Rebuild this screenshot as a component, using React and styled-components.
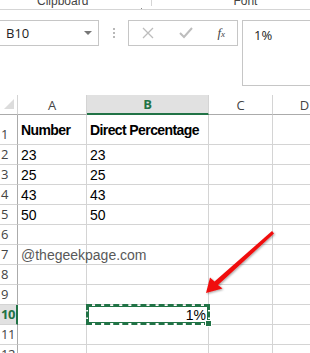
import React from "react";
import styled, { createGlobalStyle } from "styled-components";

const GlobalStyle = createGlobalStyle`
  html, body {
    margin: 0;
    padding: 0;
    background: #ffffff;
    overflow: hidden;
  }
  body {
    font-family: "Liberation Sans", Arial, sans-serif;
  }
`;

const columns = [
  { key: "A", width: 69 },
  { key: "B", width: 122 },
  { key: "C", width: 64 },
  { key: "D", width: 64 },
];

const rows = [
  { n: 1, h: 30, cells: ["Number", "Direct Percentage"], bold: true },
  { n: 2, h: 20, cells: ["23", "23"] },
  { n: 3, h: 20, cells: ["25", "25"] },
  { n: 4, h: 20, cells: ["43", "43"] },
  { n: 5, h: 20, cells: ["50", "50"] },
  { n: 6, h: 20, cells: ["", ""] },
  { n: 7, h: 20, cells: ["@thegeekpage.com", ""], muted: true },
  { n: 8, h: 20, cells: ["", ""] },
  { n: 9, h: 20, cells: ["", ""] },
  { n: 10, h: 20, cells: ["", "1%"], active: true },
  { n: 11, h: 20, cells: ["", ""] },
  { n: 12, h: 20, cells: ["", ""] },
];

const App = () => {
  return (
    <Page>
      <GlobalStyle />
      <RibbonStrip>
        <GroupLabel style={{ width: 37 }} />
        <GroupLabel>Clipboard</GroupLabel>
        <Launcher>
          <svg width="6" height="5" viewBox="0 0 6 5">
            <path d="M0.5 0 V4.5 H5" stroke="#8a8a8a" fill="none" />
            <path d="M2 1 L5 4" stroke="#8a8a8a" />
          </svg>
        </Launcher>
        <GroupDivider />
        <FontLabel>Font</FontLabel>
      </RibbonStrip>

      <FormulaArea>
        <NameBox>
          <span>B10</span>
          <Caret />
        </NameBox>
        <Grip>
          <i />
          <i />
          <i />
        </Grip>
        <FormulaButtons>
          <svg width="12" height="12" viewBox="0 0 12 12">
            <path d="M1 1 L11 11 M11 1 L1 11" stroke="#bdbdbd" strokeWidth="1.3" />
          </svg>
          <svg width="14" height="12" viewBox="0 0 14 12">
            <path d="M1 6 L5 10 L13 1" stroke="#bdbdbd" strokeWidth="2" fill="none" />
          </svg>
          <Fx>
            f<sub>x</sub>
          </Fx>
        </FormulaButtons>
        <FormulaInput>1%</FormulaInput>
      </FormulaArea>

      <Sheet>
        <Grid $cols={columns.map((c) => c.width + "px").join(" ")}>
          <Corner>
            <svg width="12" height="12" viewBox="0 0 12 12">
              <path d="M11 1 L11 11 L1 11 Z" fill="#dcdcdc" />
            </svg>
          </Corner>
          {columns.map((c) => (
            <ColHeader key={c.key} $selected={c.key === "B"}>
              {c.key}
            </ColHeader>
          ))}
          {rows.map((r) => (
            <React.Fragment key={r.n}>
              <RowHeader $h={r.h} $selected={r.active}>
                {r.n}
              </RowHeader>
              <Cell $h={r.h} $bold={r.bold} $muted={r.muted}>
                {r.cells[0]}
              </Cell>
              {r.active ? (
                <ActiveCell $h={r.h}>
                  {r.cells[1]}
                  <FillHandle />
                </ActiveCell>
              ) : (
                <Cell $h={r.h} $bold={r.bold}>
                  {r.cells[1]}
                </Cell>
              )}
              <Cell $h={r.h} />
              <Cell $h={r.h} />
            </React.Fragment>
          ))}
        </Grid>
        <Arrow width="80" height="70" viewBox="0 0 80 70">
          <defs>
            <filter id="sh" x="-20%" y="-20%" width="140%" height="140%">
              <feDropShadow dx="1" dy="1" stdDeviation="1" floodColor="#000" floodOpacity="0.35" />
            </filter>
          </defs>
          <polygon
            points="72,2 74,4.5 18,56 22.5,59.5 6,64 10,48.5 14.5,52.5"
            fill="#f01010"
            filter="url(#sh)"
          />
        </Arrow>
      </Sheet>
    </Page>
  );
};

const Page = styled.div`
  width: 310px;
  height: 353px;
  overflow: hidden;
  background: #ffffff;
`;

const RibbonStrip = styled.div`
  display: flex;
  height: 9px;
  overflow: hidden;
  border-bottom: 1px solid #d5d5d5;
`;

const GroupLabel = styled.div`
  font-family: "Liberation Sans", Arial, sans-serif;
  font-size: 12px;
  line-height: 14px;
  margin-top: -6px;
  color: #444444;
  white-space: nowrap;
`;

const FontLabel = styled(GroupLabel)`
  margin-left: 81px;
`;

const Launcher = styled.div`
  margin-left: 53px;
  margin-top: -1px;
`;

const GroupDivider = styled.div`
  width: 1px;
  height: 6px;
  background: #d5d5d5;
  margin-left: 4px;
`;

const FormulaArea = styled.div`
  display: flex;
  align-items: flex-start;
  height: 85px;
  padding-top: 10px;
  box-sizing: border-box;
`;

const NameBox = styled.div`
  display: flex;
  align-items: center;
  justify-content: space-between;
  box-sizing: border-box;
  width: 100px;
  height: 26px;
  margin-left: -1px;
  padding: 0 6px 0 6px;
  border: 1px solid #c6c6c6;
  font-family: "Open Sans", "Liberation Sans", sans-serif;
  font-size: 13px;
  color: #222222;
`;

const Caret = styled.div`
  width: 0;
  height: 0;
  border-left: 4px solid transparent;
  border-right: 4px solid transparent;
  border-top: 4px solid #777777;
`;

const Grip = styled.div`
  display: flex;
  flex-direction: column;
  gap: 2px;
  margin: 8px 0 0 14px;

  i {
    display: block;
    width: 2px;
    height: 2px;
    background: #b8b8b8;
  }
`;

const FormulaButtons = styled.div`
  display: flex;
  align-items: center;
  justify-content: space-between;
  box-sizing: border-box;
  width: 110px;
  height: 26px;
  margin-left: 13px;
  padding: 0 12px 0 13px;
  border: 1px solid #c6c6c6;
`;

const Fx = styled.span`
  font-family: "Liberation Serif", "Times New Roman", serif;
  font-style: italic;
  font-size: 13px;
  color: #444444;

  sub {
    font-size: 9px;
    vertical-align: 0;
  }
`;

const FormulaInput = styled.div`
  box-sizing: border-box;
  height: 66px;
  flex: 1;
  margin-left: 4px;
  margin-right: -2px;
  padding: 5px 11px;
  border: 1px solid #c6c6c6;
  font-family: "Open Sans", "Liberation Sans", sans-serif;
  font-size: 13px;
  color: #222222;
`;

const Sheet = styled.div`
  position: relative;
`;

const Grid = styled.div`
  display: grid;
  grid-template-columns: 18px ${(p) => p.$cols};
  font-family: "Liberation Sans", Arial, sans-serif;
`;

const Corner = styled.div`
  height: 20px;
  box-sizing: border-box;
  border-right: 1px solid #d4d4d4;
  border-bottom: 1px solid #ababab;
  display: flex;
  align-items: flex-end;
  justify-content: flex-end;
  padding: 0 2px 4px 0;
`;

const ColHeader = styled.div`
  height: 20px;
  box-sizing: border-box;
  display: flex;
  align-items: center;
  justify-content: center;
  font-family: "Open Sans", "Liberation Sans", sans-serif;
  font-size: 13px;
  color: ${(p) => (p.$selected ? "#217346" : "#444444")};
  font-weight: ${(p) => (p.$selected ? 700 : 400)};
  background: ${(p) => (p.$selected ? "#e1e1e1" : "#ffffff")};
  border-right: 1px solid #d4d4d4;
  border-bottom: ${(p) => (p.$selected ? "2px solid #217346" : "1px solid #ababab")};
`;

const RowHeader = styled.div`
  height: ${(p) => p.$h}px;
  box-sizing: border-box;
  display: flex;
  align-items: flex-end;
  padding: 0 0 1px 1px;
  font-family: "Open Sans", "Liberation Sans", sans-serif;
  font-size: 13px;
  letter-spacing: -0.5px;
  color: ${(p) => (p.$selected ? "#217346" : "#444444")};
  font-weight: ${(p) => (p.$selected ? 700 : 400)};
  background: ${(p) => (p.$selected ? "#e1e1e1" : "#ffffff")};
  border-right: ${(p) => (p.$selected ? "2px solid #217346" : "1px solid #ababab")};
  border-bottom: 1px solid #d4d4d4;
  overflow: hidden;
  white-space: nowrap;
`;

const Cell = styled.div`
  height: ${(p) => p.$h}px;
  box-sizing: border-box;
  display: flex;
  align-items: flex-end;
  padding: 0 0 ${(p) => (p.$bold ? "6px" : "1px")} 3px;
  font-size: 14px;
  letter-spacing: ${(p) => (p.$bold ? "-0.6px" : "0")};
  font-weight: ${(p) => (p.$bold ? 700 : 400)};
  color: ${(p) => (p.$muted ? "#595959" : "#000000")};
  border-right: 1px solid #d4d4d4;
  border-bottom: 1px solid #d4d4d4;
  white-space: nowrap;
  overflow: visible;
  position: relative;
  z-index: 1;
`;

const ActiveCell = styled.div`
  position: relative;
  height: ${(p) => p.$h + 1}px;
  margin-top: -1px;
  box-sizing: border-box;
  display: flex;
  align-items: center;
  justify-content: flex-end;
  padding-right: 1px;
  font-size: 14px;
  color: #000000;
  border: 3px dashed #217346;
  outline: 1px solid #217346;
  outline-offset: -3px;
  margin-left: -1px;
  margin-right: -1px;
  z-index: 2;
`;

const FillHandle = styled.div`
  position: absolute;
  right: -5px;
  bottom: -5px;
  width: 5px;
  height: 5px;
  background: #217346;
  border: 1px solid #ffffff;
`;

const Arrow = styled.svg`
  position: absolute;
  left: 200px;
  top: 134px;
  z-index: 5;
  overflow: visible;
`;

export default App;
